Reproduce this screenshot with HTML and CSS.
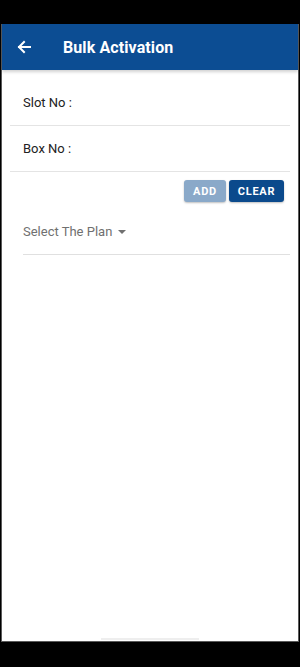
FILE: index.html
```html
<!DOCTYPE html>
<html lang="en">
<head>
    <meta charset="UTF-8">
    <meta name="viewport" content="width=device-width, initial-scale=1.0">
    <title>Bulk Activation</title>
    <link rel="stylesheet" href="styles.css">
</head>
<body>
    <div class="status-bar"></div>
    <div class="screen">
        <div class="app-bar">
            <svg class="back" width="16" height="16" viewBox="0 0 16 16">
                <path d="M14 8H3M8 3L3 8l5 5" fill="none" stroke="#fff" stroke-width="2" stroke-linecap="square"/>
            </svg>
            <div class="title">Bulk Activation</div>
        </div>

        <div class="content">
            <div class="field field-first">Slot No :</div>
            <div class="field">Box No :</div>

            <div class="actions">
                <button class="btn btn-add">ADD</button>
                <button class="btn btn-clear">CLEAR</button>
            </div>

            <div class="plan-select">
                <span>Select The Plan</span>
                <span class="caret"></span>
            </div>
        </div>

        <div class="home-indicator"></div>
    </div>
</body>
</html>
```

FILE: styles.css
```css
body {
    margin: 0;
    padding: 0;
    background-color: #000;
    font-family: Roboto, "Noto Sans", sans-serif;
    height: 667px;
    overflow: hidden;
}
.status-bar {
    height: 24px;
}
.screen {
    height: 617px;
    margin: 0 1px;
    background-color: #fff;
    border: 1px solid #5a5a5a;
    border-top: none;
    display: flex;
    flex-direction: column;
}
.app-bar {
    height: 46px;
    background-color: #0c4d93;
    display: flex;
    align-items: center;
    padding-left: 14px;
    box-shadow: 0 2px 3px rgba(0,0,0,0.18);
    flex-shrink: 0;
}
.back {
    display: block;
}
.title {
    margin-left: 31px;
    color: #fff;
    font-size: 16px;
    font-weight: bold;
    letter-spacing: 0.1px;
}
.content {
    flex: 1;
    padding: 0 8px;
}
.field {
    height: 46px;
    display: flex;
    align-items: center;
    padding-left: 13px;
    box-sizing: border-box;
    border-bottom: 1px solid #e4e4e4;
    font-size: 13px;
    color: #222;
}
.field-first {
    height: 56px;
    padding-top: 9px;
}
.actions {
    display: flex;
    justify-content: flex-end;
    gap: 3px;
    padding: 8px 6px 0 0;
}
.btn {
    height: 22px;
    border: none;
    border-radius: 3px;
    color: #fff;
    font-family: Roboto, sans-serif;
    font-size: 11px;
    font-weight: bold;
    letter-spacing: 0.7px;
    padding: 0;
    box-shadow: 0 1px 2px rgba(0,0,0,0.25);
}
.btn-add {
    width: 42px;
    background-color: #8aa9c9;
}
.btn-clear {
    width: 55px;
    background-color: #0b4a8c;
}
.plan-select {
    margin: 0 0 0 13px;
    height: 53px;
    box-sizing: border-box;
    border-bottom: 1px solid #e0e0e0;
    display: flex;
    align-items: center;
    padding-top: 7px;
    font-size: 13px;
    color: #707070;
}
.caret {
    margin-left: 6px;
    width: 0;
    height: 0;
    border-left: 4px solid transparent;
    border-right: 4px solid transparent;
    border-top: 4px solid #707070;
}
.home-indicator {
    height: 2px;
    width: 98px;
    margin: 0 auto 1px;
    background-color: #eee;
}
```
